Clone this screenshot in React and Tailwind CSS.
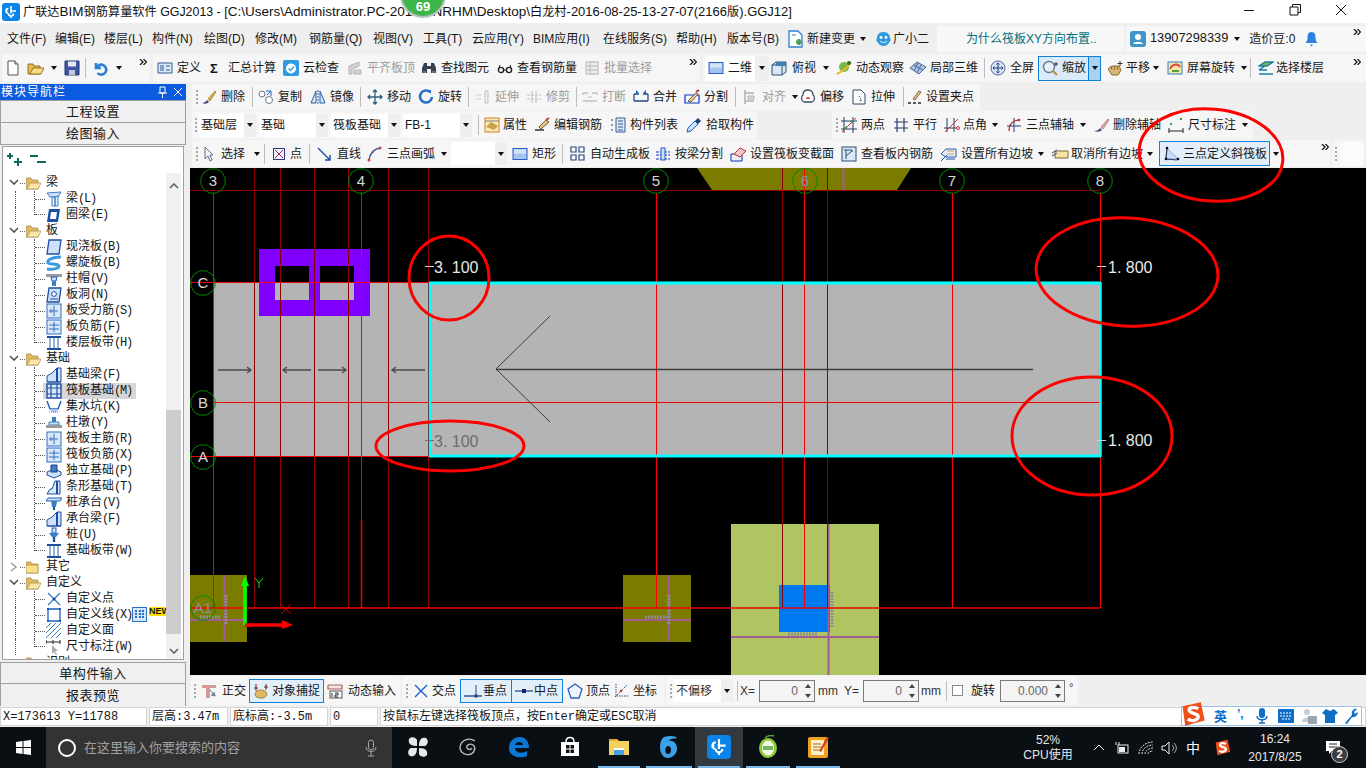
import clsx from 'clsx';

// small wrapper so every toolbar icon has the same 16px box
const S = ({ children, className = 'w-4 h-4', box = '0 0 16 16' }) => (
    <svg viewBox={box} className={clsx('shrink-0', className)}>{children}</svg>
);

const Logo = ({ className = 'w-[18px] h-[18px]' }) => (
    <svg viewBox="0 0 18 18" className={clsx('shrink-0', className)}>
        <rect width="18" height="18" rx="3" fill="#0a84e8" />
        <path d="M9 3v7.5M9 13.5v1.5M4 8h1.5M8 8h6M6.5 5.5a2.5 2.5 0 1 0 0 5M11.5 10.5a2.5 2.5 0 0 1-5 0" fill="none" stroke="#fff" strokeWidth="1.6" />
    </svg>
);

const icons = {
    doc: <S><path d="M3 1h7l3 3v11H3z" fill="#fff" stroke="#555" /><path d="M10 1v3h3" fill="#ddd" stroke="#555" /></S>,
    open: <S className="w-[18px] h-4" box="0 0 18 16"><path d="M1 4h5l1 2h6v8H1z" fill="#e8b84a" stroke="#9a7424" /><path d="M3 14l3-6h11l-3 6z" fill="#f8dc8c" stroke="#9a7424" /></S>,
    save: <S><path d="M1 1h14v14H1z" fill="#3a54a8" stroke="#26366e" /><path d="M4 1.5h8v5H4z" fill="#e6e6ee" /><path d="M5 10h6v5H5z" fill="#c6c6d0" /></S>,
    undo: <S><path d="M3 3v5h5M3.5 8a5 5 0 1 1 1 5" fill="none" stroke="#2d7fd4" strokeWidth="2.6" /></S>,
    define: <S><path d="M1 3h14v10H1z" fill="#dbe8f8" stroke="#2d5f9e" /><path d="M3 6h4M3 8h4M3 10h4M9 6h4M9 10h4" stroke="#2d5f9e" /></S>,
    cloud: <S><rect width="16" height="16" rx="2" fill="#2f9ae0" /><circle cx="8" cy="8.5" r="5" fill="#fff" /><path d="M5.5 8.5l2 2 3.5-4" fill="none" stroke="#2f9ae0" strokeWidth="1.4" /></S>,
    flush: <S><path d="M2 6l10-4v4l-7 3v5H2zM7 10h7v4H7z" fill="#d2d2d2" stroke="#b4b4b4" /></S>,
    bino: <S><path d="M1 13V8l2-5h3v10zM15 13V8l-2-5h-3v10zM6 6h4v3H6z" fill="#34404e" /><path d="M2 12h3M11 12h3" stroke="#9db2c8" /></S>,
    glasses: <S><circle cx="4" cy="10" r="2.6" fill="none" stroke="#222" strokeWidth="1.4" /><circle cx="12" cy="10" r="2.6" fill="none" stroke="#222" strokeWidth="1.4" /><path d="M6.6 10h2.8M2 8l1-3M14 8l-1-3" stroke="#222" /></S>,
    batch: <S><path d="M2 2h12v12H2zM2 6h12M2 10h12M6 2v12" fill="#eee" stroke="#c4c4c4" strokeWidth="1.3" /></S>,
    rect2d: <S><rect x="1" y="2.5" width="14" height="11" fill="#a8c4f2" stroke="#2a5fc4" /><rect x="2" y="3.5" width="12" height="4" fill="#d6e4fb" /></S>,
    cube: <S><path d="M1 5l4-3h10v10l-4 3H1z" fill="#dbe8f4" stroke="#2d4f6e" /><path d="M1 5h10v10M11 5l4-3" fill="none" stroke="#2d4f6e" /><path d="M5 2l10 0v4l-10 0z" fill="#3f7fae" /></S>,
    orbit: <S className="w-[18px] h-4" box="0 0 18 16"><circle cx="9" cy="7" r="5" fill="#7ab648" /><path d="M2 14C6 12 13 7 16 2" fill="none" stroke="#e0c020" strokeWidth="2" /><circle cx="14" cy="3" r="2" fill="#3a6a20" /></S>,
    part3d: <S className="w-[18px] h-4" box="0 0 18 16"><path d="M1 8l7-6 9 5-7 7z" fill="#a8c4e8" stroke="#4a6a90" /><path d="M5 5l9 5M9 3l-4 8M12 5l-4 8" stroke="#4a6a90" /></S>,
    full: <S><circle cx="8" cy="8" r="7" fill="#d8e4f4" stroke="#4a6a90" /><path d="M8 3v10M3 8h10M6.5 4.5L8 3l1.5 1.5M6.5 11.5L8 13l1.5-1.5M4.5 6.5L3 8l1.5 1.5M11.5 6.5L13 8l-1.5 1.5" fill="none" stroke="#1f3f80" /></S>,
    zoom: <S className="w-[18px] h-4" box="0 0 18 16"><circle cx="7" cy="7" r="5.5" fill="#e8f0fa" stroke="#6a7a8a" strokeWidth="1.4" /><path d="M11 11l4 4" stroke="#c09040" strokeWidth="2.2" /><path d="M14 2v4M12 4h4" stroke="#333" /></S>,
    pan: <S className="w-5 h-4" box="0 0 20 16"><path d="M3 9l4-3 7 0 2 4-3 5H7z" fill="#d8b878" stroke="#8a6a30" /><path d="M6 6l1 4M9 6l1 4M12 6l1 4" stroke="#8a6a30" /><path d="M15 1v5M12.5 3.5h5" stroke="#333" /></S>,
    rotate: <S><rect x="1" y="2" width="14" height="12" fill="#f4e8a0" stroke="#2d7fd4" /><path d="M3 9c2-5 8-6 10-2" fill="none" stroke="#d44" strokeWidth="1.8" /><path d="M5 11h7" stroke="#5a9a3a" strokeWidth="2" /></S>,
    floors: <S><path d="M1 6l6-4h8L9 6zM1 10l6-4M1 10h8M1 14h14" fill="#7ab648" stroke="#1c7fa8" strokeWidth="1.5" /></S>,
    del: <S><path d="M1 14c2 0 4-1 5-3l2 2c-2 2-4 2-7 1z" fill="#3a4a70" /><path d="M7 10l7-8 1 1-6 9z" fill="#e0b040" stroke="#8a6a20" strokeWidth=".6" /></S>,
    copy: <S><circle cx="4" cy="5" r="3" fill="#fff" stroke="#6a7a8a" /><circle cx="11" cy="11" r="3.5" fill="#fff" stroke="#6a7a8a" /><path d="M8 2h5v5M13 2L9 6" fill="none" stroke="#2a5fc4" /></S>,
    mirror: <S><path d="M1 14L6 2v12zM15 14L10 2v12z" fill="#dbe8f8" stroke="#2a5fa8" /><path d="M8 1v14" stroke="#2a5fa8" strokeDasharray="2 1" /></S>,
    move: <S><path d="M8 1v14M1 8h14M6 3l2-2 2 2M6 13l2 2 2-2M3 6L1 8l2 2M13 6l2 2-2 2" fill="none" stroke="#2d5f80" strokeWidth="1.3" /></S>,
    spin: <S><path d="M12 3a6 6 0 1 0 2 5" fill="none" stroke="#2a6fc4" strokeWidth="2.6" /><path d="M9 1l4 0 0 4z" fill="#2a6fc4" /></S>,
    extend: <S><path d="M1 6h6M1 10h6" stroke="#c0c0c0" strokeDasharray="2 1" /><path d="M10 2h3v12h-3z" fill="#eee" stroke="#c0c0c0" /></S>,
    trim: <S><path d="M1 6h14M1 10h14" stroke="#c0c0c0" strokeDasharray="3 1" /><path d="M6 2v12M10 2v12" stroke="#c0c0c0" /></S>,
    brk: <S><path d="M1 4h5M10 4h5M1 12h14M1 4v2M15 4v2" stroke="#c0c0c0" strokeWidth="1.4" /><path d="M6 8h4" stroke="#c0c0c0" /></S>,
    merge: <S><path d="M1 5h5M15 5h-5M1 12h14M1 5v7M15 5v7" fill="none" stroke="#2a4a80" strokeWidth="1.3" /><path d="M3 1l3 3-3 1zM13 1l-3 3 3 1z" fill="#1c5fc0" /></S>,
    split: <S><path d="M1 6h14v8H1z" fill="none" stroke="#1030c0" strokeWidth="1.2" /><path d="M4 12l8-8 2 1-7 8z" fill="#e8d4a0" stroke="#6a5a30" /><path d="M12 3l3-2" stroke="#c03030" strokeWidth="2" /></S>,
    align: <S><path d="M3 1v14M3 4h9M3 12h9" stroke="#b0b0b0" strokeWidth="1.5" /><path d="M6 7h6v3H6z" fill="#ddd" stroke="#b0b0b0" /></S>,
    offset: <S><path d="M8 1C4 1 3 4 3 6 1 7 1 12 4 13h8c3-1 3-6 1-7 0-2-1-5-5-5z" fill="#fff" stroke="#3a4a60" strokeWidth="1.3" /><path d="M6 10c0-3 4-3 4 0z" fill="#e06050" /></S>,
    stretch: <S><path d="M2 1h8l4 4v10H2z" fill="#fff" stroke="#2a4a70" /><path d="M8 7l3 5M10 12l-2-1" stroke="#2a4a70" strokeDasharray="1.5 1" fill="none" /></S>,
    grip: <S><path d="M1 14h3M6 14h3M11 14h3" stroke="#222" strokeWidth="1.6" /><path d="M6 10l6-8 2 1-6 8z" fill="#e8c878" stroke="#7a6a40" /></S>,
    attr: <S><rect x="1" y="1" width="14" height="14" fill="#fde9b8" stroke="#d08020" /><path d="M2 10l5-5 7 4-4 4z" fill="#c9a24a" /><path d="M1 4h14" stroke="#808080" /></S>,
    edit: <S><path d="M1 13h9" stroke="#222" strokeWidth="1.4" /><path d="M5 10l7-7 3 2-8 7z" fill="#e8c878" stroke="#6a5a30" /><path d="M12 3l3-2" stroke="#c04030" strokeWidth="2" /></S>,
    list: <S><path d="M1 2h2v2H1zM1 7h2v2H1zM1 12h2v2H1z" fill="#8a9ab0" /><path d="M6 1h9v14H6z" fill="#dbe8f8" stroke="#3a5a8a" /><path d="M8 4h5M8 7h5M8 10h5M8 13h5" stroke="#3a5a8a" /></S>,
    pick: <S><path d="M1 15l1-4 7-7 3 3-7 7z" fill="#cfe0fa" stroke="#1c5fc0" /><path d="M9 4l3-3 3 3-3 3z" fill="#1c3f80" /></S>,
    twopt: <S><path d="M3 0v16M12 0v16M0 4h16M0 12h16" stroke="#2a3a70" /><path d="M1 15L15 1" stroke="#d03030" /><circle cx="5" cy="11" r="1.4" fill="#3a9a3a" /><circle cx="11" cy="5" r="1.4" fill="#3a9a3a" /></S>,
    parallel: <S><path d="M4 1v14M11 1v14M1 5h14M1 11h14" stroke="#2a3a70" strokeWidth="1.2" /></S>,
    angle: <S><path d="M3 1v14M10 1v14M0 11h13" stroke="#2a3a70" /><path d="M1 15L14 2" stroke="#d03030" /><circle cx="14" cy="11" r="1.5" fill="none" stroke="#d03030" /></S>,
    arc3: <S><path d="M3 14C3 7 7 3 13 3" fill="none" stroke="#c03030" strokeWidth="1.3" /><path d="M8 1v14M1 9h14" stroke="#2a3a70" /><circle cx="13" cy="3" r="1.3" fill="#c03030" /></S>,
    delaxis: <S className="w-[18px] h-4" box="0 0 18 16"><path d="M1 14c3 0 5-1 6-3l2 2c-2 2-5 2-8 1z" fill="#3a4a70" /><path d="M8 10l7-8 1 1-6 9z" fill="#e8a8a8" stroke="#7a5a5a" strokeWidth=".6" /></S>,
    dim: <S><path d="M1 14h14M1 11v5M15 11v5" stroke="#222" /><rect x="2" y="6" width="2" height="2" fill="#3a9a3a" /><rect x="12" y="1" width="2" height="2" fill="#3a9a3a" /></S>,
    cursor: <S className="w-[10px] h-4" box="0 0 10 16"><path d="M1 1v12l3-3 2 5 2-1-2-5h3z" fill="#f4f4f4" stroke="#6a6a8a" /></S>,
    point: <S className="w-3 h-3" box="0 0 12 12"><rect x=".5" y=".5" width="11" height="11" fill="#eef2fa" stroke="#303a80" /><path d="M2 2l8 8M10 2l-8 8" stroke="#a02060" /></S>,
    line: <S><path d="M1 2l12 12M13 9v5H8" fill="none" stroke="#1c4fa0" strokeWidth="1.4" /></S>,
    arc: <S><path d="M2 14C3 7 7 3 13 2" fill="none" stroke="#2a5fa0" strokeWidth="1.4" /><circle cx="2" cy="14" r="1.5" fill="#d04040" /><circle cx="13" cy="2" r="1.5" fill="#d04040" /><circle cx="6" cy="6" r="1" fill="#d04040" /></S>,
    autoboard: <S><path d="M1 1h5v5H1zM9 1h5v5H9zM1 9h5v5H1zM9 9h5v5H9z" fill="#fff" stroke="#2a4a80" strokeWidth="1.2" /></S>,
    beamsplit: <S><path d="M1 13h14M1 9h14M1 6h14" stroke="#1030c0" strokeDasharray="3 1" /><rect x="6" y="2" width="4" height="12" fill="#cfe0fa" stroke="#1c5fc0" /></S>,
    section: <S className="w-[18px] h-4" box="0 0 18 16"><path d="M1 8h11v7H1z" fill="#e8f0fc" stroke="#1030c0" /><path d="M4 8l6-6 6 3-6 6z" fill="#f0c8c8" stroke="#c03030" /></S>,
    viewrebar: <S><rect x="1" y="1" width="14" height="14" fill="#dbe8f8" stroke="#2a4a70" /><path d="M3 4h8v2M5 10l6-5M5 4v9" fill="none" stroke="#2a4a70" /></S>,
    slopeall: <S className="w-[18px] h-4" box="0 0 18 16"><path d="M1 8l5-5h10v8H6z" fill="#e8f0fc" stroke="#2a5fa8" /><path d="M1 15l6-6M6 13h9" stroke="#1c4fa0" /><path d="M7 5h7M7 8h7" stroke="#c9a24a" /></S>,
    slopeoff: <S className="w-[18px] h-4" box="0 0 18 16"><path d="M4 5h13v7H4z" fill="#f4e4a0" stroke="#7a6a30" /><path d="M1 7l5-3M1 10l5-3" stroke="#2a4a80" /></S>,
    slope3: <S><path d="M3 2L14 13H2z" fill="#c9dcf8" stroke="#8aa8d8" /><path d="M3 2L2 13l11 1" fill="none" stroke="#2a3a60" strokeWidth="1.2" /><circle cx="3" cy="2" r="1.3" /><circle cx="2" cy="13" r="1.3" /><circle cx="14" cy="13" r="1.3" /></S>,
    ortho: <S><path d="M1 2h14v3H1zM5 2h4v13H5z" fill="#d49a9a" /><path d="M9 7l5 6M13 9l1 4-4-1" fill="#8a9ab0" stroke="#6a7a90" /></S>,
    snap: <S><path d="M3 1v7M13 1v6" stroke="#b04040" strokeWidth="1.3" /><path d="M2 11c2-5 7-5 11-2 2 2 0 6-4 6-4 0-7-1-7-4z" fill="#e0b860" stroke="#a08030" /><path d="M1 5h4M11 4h4" stroke="#3a3a3a" /></S>,
    dyn: <S><path d="M1 2h14M1 2v4h14V2" fill="#f4e4e4" stroke="#b06060" strokeWidth="1.2" /><rect x="3" y="8" width="12" height="7" fill="#fff" stroke="#555" /><path d="M5 10v4M8 10h3v2H8v2h3" fill="none" stroke="#222" /></S>,
    cross: <S><path d="M2 2l12 12M14 2L2 14" stroke="#1c5fc0" strokeWidth="1.4" /></S>,
    perp: <S className="w-5 h-4" box="0 0 20 16"><path d="M1 13h18" stroke="#2a4a80" strokeWidth="1.4" /><path d="M13 2v11" stroke="#2a4a80" /><rect x="11.5" y="11.5" width="3" height="3" fill="#1c3f90" /></S>,
    mid: <S className="w-5 h-4" box="0 0 20 16"><path d="M1 8h18" stroke="#3a5a90" strokeWidth="1.4" /><rect x="8" y="6" width="4" height="4" fill="#10207a" /></S>,
    apex: <S><path d="M8 1l7 5-3 9H4L1 6z" fill="#eef4fc" stroke="#2a5fc4" strokeWidth="1.3" /></S>,
    coord: <S><path d="M3 1v12h12" fill="none" stroke="#2a4a80" strokeDasharray="1.5 1" /><path d="M2 14L14 2" stroke="#2a4a80" strokeDasharray="1.5 1" /><circle cx="8" cy="8" r="1.3" fill="#c03030" /></S>,
    change: <S className="w-4 h-[18px]" box="0 0 16 18"><path d="M1 1h9l4 4v12H1z" fill="#fff" stroke="#2d7fd4" strokeWidth="1.3" /><path d="M4 5h4" stroke="#2d7fd4" /><path d="M11 9v6M8 12h6" stroke="#4aa04a" strokeWidth="3" /></S>,
    smile: <S className="w-[17px] h-4" box="0 0 17 16"><path d="M8.5 1C4 1 2 4 2 7c-1 1-1 3 0 3 1 3 4 5 6.5 5S14 13 15 10c1 0 1-2 0-3 0-3-2-6-6.5-6z" fill="#2f9ae0" /><circle cx="6" cy="6.5" r="1.4" fill="#fff" /><circle cx="11" cy="6.5" r="1.4" fill="#fff" /><path d="M5 10c2 2 5 2 7 0" fill="none" stroke="#fff" /></S>,
    user: <S><rect width="16" height="16" rx="3" fill="#3f94c8" /><circle cx="8" cy="6" r="3" fill="#fff" /><path d="M3 13c1-3 9-3 10 0z" fill="#fff" /></S>,
    bell: <S className="w-[13px] h-4" box="0 0 13 16"><path d="M6.5 1C3 1 2.5 4 2.5 7c0 2-1 4-2 5h12c-1-1-2-3-2-5 0-3-.5-6-4-6z" fill="#2f7fe0" /><path d="M5 13.5h3L6.5 15.5z" fill="#2f7fe0" /></S>,
};

const treeIcons = {
    beam: <S><path d="M1 2l14-1-3 5H4z" fill="#cfe0fa" stroke="#3a7fc4" /><path d="M6 6h3v9H6zM9 6l3-1v10H9z" fill="#e6f0fd" stroke="#3a7fc4" /></S>,
    ring: <S><path d="M3 2h11l-2 13H1z" fill="#1c4fa0" /><path d="M5 5h6l-1 7H4z" fill="#fff" /></S>,
    slab: <S><path d="M3 1h12l-2 14H1z" fill="#cfe0fa" stroke="#1c4fa0" strokeWidth="1.3" /></S>,
    spiral: <S><path d="M15 2C6 2 1 5 2 8c2 2 9 0 11 3 0 2-5 4-12 3" fill="none" stroke="#3a9ae0" strokeWidth="3" /></S>,
    cap: <S><path d="M0 3h16v3H0z" fill="#9a9a9a" /><path d="M5 6h6l-1 4H6z" fill="#cfe0fa" stroke="#1c5fc0" /><rect x="6" y="10" width="4" height="5" fill="#3a7fc4" /></S>,
    hole: <S><path d="M3 1h12l-2 14H1z" fill="#cfe0fa" stroke="#1c4fa0" strokeWidth="1.3" /><circle cx="8" cy="7" r="2.4" fill="#fff" stroke="#1c4fa0" /><path d="M4 12h8" stroke="#1c4fa0" /></S>,
    rebar: <S><rect x="1" y="1" width="14" height="14" fill="#dbe8f8" stroke="#2a6fc4" /><path d="M8 3v10M3 8h9M5 6v4" fill="none" stroke="#2a6fc4" /></S>,
    neg: <S><rect x="1" y="1" width="14" height="14" fill="#dbe8f8" stroke="#2a6fc4" /><path d="M3 6h10M3 10h10M8 3v10" fill="none" stroke="#2a6fc4" /></S>,
    strip: <S><path d="M1 2h14M1 14h14" stroke="#1c4fa0" strokeWidth="1.8" /><path d="M4 3v10M8 3v10M12 3v10" stroke="#5a8ac4" strokeWidth="1.3" /></S>,
    fbeam: <S><path d="M1 15V9l5-3 5-5h4v14z" fill="#cfe0fa" stroke="#1c4fa0" /><path d="M11 1v14" stroke="#1c4fa0" strokeWidth="2" /><path d="M1 15h14" stroke="#1c4fa0" /></S>,
    raft: <S><rect x="1" y="1" width="14" height="14" fill="#dbe8f8" stroke="#1c4fa0" strokeWidth="1.4" /><path d="M5 1v14M11 1v14M1 5h14M1 11h14" stroke="#1c4fa0" strokeWidth="1.2" /></S>,
    pit: <S><path d="M1 2l3 8h8l3-8" fill="none" stroke="#1c5fc0" strokeWidth="1.4" /><path d="M4 10c1 5 7 5 8 0z" fill="#a8c4e8" /><path d="M3 13h10" stroke="#6a8ab0" strokeDasharray="1 1" /></S>,
    pier: <S><path d="M6 2h4v5H6z" fill="#3a7fc4" /><path d="M3 7h10v3H3z" fill="#cfe0fa" stroke="#3a7fc4" /><path d="M0 10h16v3H0z" fill="#9a9a9a" /></S>,
    iso: <S><path d="M1 9l7-3 7 3v3l-7 3-7-3z" fill="#cfe0fa" stroke="#1c4fa0" /><path d="M5 2h6v7H5z" fill="#3a7fc4" stroke="#1c3f80" /></S>,
    bar: <S><path d="M1 15l3-5h2l3-8h5v13z" fill="#dbe8f8" stroke="#1c4fa0" /><path d="M11 2v13" stroke="#1c4fa0" strokeWidth="2" /></S>,
    cap2: <S><path d="M2 3h14l-2 3H0z" fill="#cfe0fa" stroke="#1c5fc0" /><path d="M5 6h6l-1 6H6z" fill="#3a7fc4" /><path d="M8 12v3" stroke="#1c4fa0" strokeWidth="2" /></S>,
    pile: <S><rect x="6" y="1" width="4" height="5" fill="#cfe0fa" stroke="#1c5fc0" /><path d="M3 6h10l-3 4H6z" fill="#3a7fc4" /><path d="M8 10v5" stroke="#1c4fa0" strokeWidth="2.4" /></S>,
    cpoint: <S><path d="M2 2l12 12M14 2L2 14" stroke="#3a7fc4" strokeWidth="1.4" /><circle cx="8" cy="8" r="1.5" fill="#1c4fa0" /></S>,
    cline: <S><path d="M2 2h12v12H2z" fill="#fff" stroke="#1c5fc0" strokeWidth="1.3" /><path d="M1 1h2v2H1zM13 1h2v2h-2zM1 13h2v2H1zM13 13h2v2h-2z" fill="#1c5fc0" /></S>,
    cface: <S><rect width="15" height="15" fill="#fff" /><path d="M0 5l5-5M0 10L10 0M0 15L15 0M5 15L15 5M10 15l5-5" stroke="#3a7fc4" /></S>,
    cdim: <S><path d="M0 3h14M0 1v4M14 1v4M7 1v4" stroke="#222" /><path d="M6 6v9l2-2 2 3 1-1-2-3h3z" fill="#aaa" /></S>,
};

const Folder = ({ open = true }) => (
    <S className="w-[15px] h-[13px]" box="0 0 15 13">
        <path d="M0 1h5l1 2h6v9H0z" fill="#e2b860" stroke="#a8894a" strokeWidth=".7" />
        {open ? <path d="M1 12l3-6h11l-3 6z" fill="#fbe6a8" stroke="#a8894a" strokeWidth=".7" /> : <path d="M0 4h12v8H0z" fill="#fbe08c" stroke="#a8894a" strokeWidth=".7" />}
    </S>
);

const Caret = ({ className = 'ml-[6px]' }) => (
    <svg viewBox="0 0 6 4" className={clsx('w-[6px] h-1 shrink-0', className)}><path d="M0 0h6L3 4z" fill="#111" /></svg>
);

const More = ({ className }) => (
    <svg viewBox="0 0 8 6" className={clsx('w-2 h-[6px] shrink-0', className)}>
        <path d="M1 0l3 3-3 3M4.5 0l3 3-3 3" fill="none" stroke="#111" strokeWidth="1.2" />
    </svg>
);

const Grip = ({ className = 'ml-[4px] w-[5px]' }) => (
    <div className={clsx('flex flex-col gap-[2px] shrink-0', className)}>
        <i className="w-[2px] h-[2px] bg-[#a8a8a8]" />
        <i className="w-[2px] h-[2px] bg-[#a8a8a8]" />
        <i className="w-[2px] h-[2px] bg-[#a8a8a8]" />
        <i className="w-[2px] h-[2px] bg-[#a8a8a8]" />
    </div>
);

const Sep = ({ w }) => (
    <div className={clsx('h-full flex items-center shrink-0', w)}><i className="w-px h-[20px] bg-[#bdbdbd]" /></div>
);

function Tool({ w, icon, label, gray, caret, gap = 'gap-[4px]' }) {
    return (
        <div className={clsx('flex items-center h-full shrink-0 whitespace-nowrap', w, gap, gray && 'text-[#9c9c9c]')}>
            {icon}
            {label && <span>{label}</span>}
            {caret && <Caret className="ml-[2px]" />}
        </div>
    );
}

function Combo({ w, label }) {
    return (
        <div className={clsx('flex items-center h-[23px] bg-white shrink-0 pl-[2px]', w)}>
            <span className="flex-1 whitespace-nowrap overflow-hidden">{label}</span>
            <div className="w-[12px] h-full bg-[#efefef] flex items-center justify-center"><Caret className="m-0" /></div>
        </div>
    );
}

const menus = [
    ['文件(F)', 'w-[48px]'], ['编辑(E)', 'w-[49px]'], ['楼层(L)', 'w-[48px]'], ['构件(N)', 'w-[52px]'],
    ['绘图(D)', 'w-[51px]'], ['修改(M)', 'w-[54px]'], ['钢筋量(Q)', 'w-[64px]'], ['视图(V)', 'w-[50px]'],
    ['工具(T)', 'w-[49px]'], ['云应用(Y)', 'w-[61px]'], ['BIM应用(I)', 'w-[70px]'], ['在线服务(S)', 'w-[73px]'],
    ['帮助(H)', 'w-[51px]'], ['版本号(B)', 'w-[61px]'],
];

function TitleBar() {
    return (
        <div className="h-[23px] bg-white flex items-center pl-[2px] shrink-0">
            <Logo />
            {/* the title's chinese runs are narrower than its latin, hence the mixed sizes */}
            <span className="ml-[3px] text-[13.5px] whitespace-nowrap text-[#111]">
                <span className="text-[12.2px]">广联达</span>BIM<span className="text-[12.2px]">钢筋算量软件</span><span className="text-[12.4px]"> GGJ2013 - [</span>C:\Users\Administrator.PC-2014\VNRHM\Desktop\
                <span className="text-[13px]"><span className="text-[12.2px]">白龙村</span>-2016-08-25-13-27-07(2166<span className="text-[12.2px]">版</span>).GGJ12]</span>
            </span>
            <div className="ml-auto flex items-center h-full">
                <svg viewBox="0 0 140 23" className="w-[140px] h-[23px]">
                    <path d="M18 10.5h10M64 7h8v8h-8zM66.5 7V4.5h8v8H72M110 5l10 10M120 5l-10 10" fill="none" stroke="#111" />
                </svg>
            </div>
        </div>
    );
}

function MenuBar() {
    return (
        <div className="h-[31px] flex items-center pl-[7px] shrink-0">
            {menus.map(([label, w]) => <div key={label} className={clsx('shrink-0 whitespace-nowrap', w)}>{label}</div>)}
            <Tool w="w-[87px]" icon={icons.change} label="新建变更" gap="gap-[3px]" caret />
            <Tool w="w-[62px]" icon={icons.smile} label="广小二" gap="gap-[1px]" />
            <div className="w-[187px] h-[26px] bg-[#f7f7f7] rounded-[3px] flex items-center pl-[29px] text-[#00707c] whitespace-nowrap shrink-0">为什么筏板XY方向布置..</div>
            <div className="ml-[2px] flex-1 h-[26px] bg-[#f7f7f7] rounded-[3px] flex items-center pl-[4px]">
                {icons.user}
                <span className="ml-[4px] text-[12.8px]">13907298339</span>
                <Caret className="ml-[6px]" />
                <span className="ml-[9px]">造价豆:0</span>
                <span className="ml-[10px]">{icons.bell}</span>
                <More className="ml-auto mr-[5px] -translate-y-[7px]" />
            </div>
        </div>
    );
}

function MainToolbar() {
    return (
        <div className="h-[28px] flex items-center gap-[3px] shrink-0 pl-[2px]">
            <div className="w-[148px] h-full bg-[#f6f6f6] rounded-[3px] flex items-center pl-[3px]">
                <Tool w="w-[22px]" icon={icons.doc} />
                <Tool w="w-[37px]" icon={icons.open} caret />
                <Tool w="w-[21px]" icon={icons.save} />
                <Sep w="w-[8px]" />
                <Tool w="w-[34px]" icon={icons.undo} caret gap="gap-[5px]" />
                <More className="ml-[12px] -translate-y-[6px]" />
            </div>
            <div className="w-[547px] h-full bg-[#f6f6f6] rounded-[3px] flex items-center pl-[4px]">
                <Tool w="w-[53px]" icon={icons.define} label="定义" />
                <Tool w="w-[73px]" icon={<span className="w-[11px] font-bold text-[13px] leading-none">Σ</span>} label="汇总计算" gap="gap-[7px]" />
                <Tool w="w-[64px]" icon={icons.cloud} label="云检查" />
                <Tool w="w-[74px]" icon={icons.flush} label="平齐板顶" gray />
                <Tool w="w-[76px]" icon={icons.bino} label="查找图元" />
                <Tool w="w-[87px]" icon={icons.glasses} label="查看钢筋量" />
                <Tool w="w-[105px]" icon={icons.batch} label="批量选择" gray />
                <More className="-translate-y-[6px]" />
            </div>
            <div className="flex-1 h-full bg-[#f6f6f6] rounded-[3px] flex items-center pl-[2px]">
                <div className="w-[50px] h-[25px] bg-white flex items-center gap-[4px] pl-[3px] shrink-0">
                    {icons.rect2d}<span>二维</span>
                </div>
                <div className="w-[14px] h-[25px] bg-[#efefef] flex items-center justify-center shrink-0 mr-[2px]"><Caret className="m-0" /></div>
                <Tool w="w-[64px]" icon={icons.cube} label="俯视" caret gap="gap-[5px]" />
                <Tool w="w-[74px]" icon={icons.orbit} label="动态观察" gap="gap-[3px]" />
                <Tool w="w-[75px]" icon={icons.part3d} label="局部三维" gap="gap-[3px]" />
                <Sep w="w-[6px]" />
                <Tool w="w-[48px]" icon={icons.full} label="全屏" />
                <div className="w-[51px] h-[25px] bg-[#d9ebfb] border border-[#0f80d8] flex items-center gap-[2px] pl-[3px] shrink-0">
                    {icons.zoom}<span>缩放</span>
                </div>
                <div className="w-[12px] h-[25px] bg-[#a8d2f4] border border-l-0 border-[#0f80d8] flex items-center justify-center shrink-0 mr-[4px]"><Caret className="m-0" /></div>
                <Tool w="w-[62px]" icon={icons.pan} label="平移" caret gap="gap-[1px]" />
                <Tool w="w-[83px]" icon={icons.rotate} label="屏幕旋转" caret />
                <Sep w="w-[8px]" />
                <Tool w="w-[70px]" icon={icons.floors} label="选择楼层" gap="gap-[2px]" />
                <More className="ml-auto mr-[5px] -translate-y-[6px]" />
            </div>
        </div>
    );
}

function EditRow() {
    return (
        <div className="h-[26px] flex shrink-0 ml-[2px]">
            <div className="w-[788px] h-full bg-[#f6f6f6] rounded-[3px] flex items-center">
                <Grip className="ml-[4px] w-[5px]" />
                <Tool w="w-[51px]" icon={icons.del} label="删除" />
                <Sep w="w-[6px]" />
                <Tool w="w-[52px]" icon={icons.copy} label="复制" />
                <Tool w="w-[50px]" icon={icons.mirror} label="镜像" />
                <Sep w="w-[7px]" />
                <Tool w="w-[51px]" icon={icons.move} label="移动" />
                <Tool w="w-[50px]" icon={icons.spin} label="旋转" />
                <Sep w="w-[7px]" />
                <Tool w="w-[51px]" icon={icons.extend} label="延伸" gray />
                <Tool w="w-[50px]" icon={icons.trim} label="修剪" gray />
                <Sep w="w-[6px]" />
                <Tool w="w-[51px]" icon={icons.brk} label="打断" gray />
                <Tool w="w-[51px]" icon={icons.merge} label="合并" />
                <Tool w="w-[51px]" icon={icons.split} label="分割" />
                <Sep w="w-[7px]" />
                <Tool w="w-[58px]" icon={icons.align} label="对齐" gray caret />
                <Tool w="w-[51px]" icon={icons.offset} label="偏移" />
                <Tool w="w-[52px]" icon={icons.stretch} label="拉伸" />
                <Sep w="w-[4px]" />
                <Tool w="w-[73px]" icon={icons.grip} label="设置夹点" gap="gap-[3px]" />
            </div>
        </div>
    );
}

function PropRow() {
    return (
        <div className="h-[28px] flex shrink-0 ml-[2px] mt-px">
            <div className="w-[565px] h-full bg-[#f6f6f6] rounded-[3px] flex items-center">
                <Grip className="ml-[3px] w-[4px]" />
                <Combo w="w-[57px] mr-[3px]" label="基础层" />
                <Combo w="w-[69px] mr-[3px]" label="基础" />
                <Combo w="w-[69px] mr-[3px]" label="筏板基础" />
                <Combo w="w-[69px] mr-[6px]" label="FB-1" />
                <Sep w="w-[6px]" />
                <Tool w="w-[50px]" icon={icons.attr} label="属性" gap="gap-[3px]" />
                <Tool w="w-[76px]" icon={icons.edit} label="编辑钢筋" />
                <Tool w="w-[76px]" icon={icons.list} label="构件列表" />
                <Tool w="w-[71px]" icon={icons.pick} label="拾取构件" />
            </div>
            <div className="ml-[75px] w-[421px] h-full bg-[#f6f6f6] rounded-[3px] flex items-center">
                <Grip className="ml-[4px] w-[5px]" />
                <Tool w="w-[52px]" icon={icons.twopt} label="两点" />
                <Tool w="w-[51px]" icon={icons.parallel} label="平行" />
                <Tool w="w-[62px]" icon={icons.angle} label="点角" gap="gap-[3px]" caret />
                <Tool w="w-[87px]" icon={icons.arc3} label="三点辅轴" caret />
                <Tool w="w-[75px]" icon={icons.delaxis} label="删除辅轴" gap="gap-[2px]" />
                <Tool w="w-[85px]" icon={icons.dim} label="尺寸标注" caret />
            </div>
        </div>
    );
}

function DrawRow() {
    return (
        <div className="h-[28px] flex shrink-0 ml-[2px] mt-px">
            <div className="w-[1138px] h-[27px] bg-[#f6f6f6] rounded-[3px] flex items-center">
                <Grip className="ml-[4px] w-[8px]" />
                <Tool w="w-[60px]" icon={icons.cursor} label="选择" gap="gap-[7px]" caret />
                <Sep w="w-[9px]" />
                <Tool w="w-[36px]" icon={icons.point} label="点" gap="gap-[5px]" />
                <Sep w="w-[8px]" />
                <Tool w="w-[50px]" icon={icons.line} label="直线" />
                <Tool w="w-[84px]" icon={icons.arc} label="三点画弧" caret />
                <Combo w="w-[56px] mr-[5px]" label="" />
                <Tool w="w-[50px]" icon={icons.rect2d} label="矩形" />
                <Sep w="w-[8px]" />
                <Tool w="w-[85px]" icon={icons.autoboard} label="自动生成板" />
                <Tool w="w-[75px]" icon={icons.beamsplit} label="按梁分割" />
                <Tool w="w-[111px]" icon={icons.section} label="设置筏板变截面" gap="gap-[2px]" />
                <Tool w="w-[99px]" icon={icons.viewrebar} label="查看板内钢筋" />
                <Tool w="w-[111px]" icon={icons.slopeall} label="设置所有边坡" gap="gap-[3px]" caret />
                <Tool w="w-[108px]" icon={icons.slopeoff} label="取消所有边坡" gap="gap-[2px]" caret />
                <div className="w-[111px] h-[25px] bg-[#e2effa] border border-[#0f80d8] flex items-center gap-[3px] pl-[4px] shrink-0">
                    {icons.slope3}<span>三点定义斜筏板</span>
                </div>
                <Caret className="ml-[3px]" />
                <More className="ml-[42px] -translate-y-[7px]" />
            </div>
            <div className="ml-[2px] w-[32px] h-[27px] bg-[#f6f6f6] rounded-[3px] flex items-center">
                <Grip className="ml-[3px] w-[5px]" />
                <div className="flex-1 h-[24px] bg-[#fbfbfb]" />
            </div>
        </div>
    );
}

const gridV = [254, 280, 314, 348, 388, 428, 782, 827];
const axisV = [213, 361, 656, 952, 1100];
const axes = [
    [213, 181, '3'], [361, 181, '4'], [656, 181, '5'], [805, 181, '6'], [952, 181, '7'], [1100, 181, '8'],
    [203, 283, 'C'], [203, 403, 'B'], [203, 457, 'A'], [203, 608, 'A1'],
];

function octa(cx, cy, r) {
    const pts = [];
    for (let i = 0; i < 12; i++) {
        const a = (i * Math.PI) / 6 + Math.PI / 12;
        pts.push(`${cx + r * Math.cos(a)},${cy + r * Math.sin(a)}`);
    }
    return pts.join(' ');
}

// the drawing area is a CAD view, so it is one svg in page coordinates
function Canvas() {
    const arrows = [
        [218, 251, 1], [311, 283, -1], [318, 346, 1], [425, 392, -1],
    ];
    return (
        <svg viewBox="190 168 1176 507" className="block w-full h-[507px] bg-black shrink-0">
            <rect x="213" y="282" width="888" height="175" fill="#b4b4b4" />
            <path d="M259 249h111v67H259zM275 266v34h34v-34zM320 266v34h34v-34z" fill="#8000ff" fillRule="evenodd" />
            <path d="M697 168h214l-14 22H712z" fill="#7b7b00" />
            <path d="M843.5 168v22" stroke="#a45a96" strokeWidth="2" />

            <rect x="190" y="575" width="57" height="67" fill="#7b7b00" />
            <rect x="623" y="575" width="68" height="67" fill="#7b7b00" />
            <rect x="731" y="524" width="148" height="151" fill="#afc562" />
            <rect x="779" y="585" width="51" height="47" fill="#0078f0" />
            <path d="M224.5 575v67M190 620h57M668.5 575v67M623 620h68M828.5 524v151M731 637h148" stroke="#a45a96" strokeWidth="2" fill="none" />
            <path d="M226 595v30M200 617h20M669 595v30M645 617h22M832 592v36M788 634h30" stroke="#8f8f8f" strokeWidth="3" strokeDasharray="2 1" fill="none" />

            {gridV.map((x) => <path key={x} d={`M${x + 0.5} 168V608`} stroke="#8b0000" strokeWidth="1" />)}
            {axisV.map((x) => <path key={x} d={`M${x + 0.5} 193V608`} stroke="#ff0000" strokeWidth="1" />)}
            <path d="M804.5 168V608" stroke="#ff0000" />
            <path d="M190 190.5H1100" stroke="#8b0000" />
            <path d="M190 282.5H429M190 456.5H429M213 402.5H1100" stroke="#f00000" />
            <path d="M190 608H1100" stroke="#f00000" strokeWidth="1.5" />
            <path d="M361.5 520V608" stroke="#f00000" strokeWidth="1.5" />

            {/* cyan outline sits on top of the grid */}
            <path d="M429 283h672M429 456h672" stroke="#00ffff" strokeWidth="3" />
            <path d="M430 282v175M1100.5 282v175" stroke="#00ffff" strokeWidth="2.5" />

            {arrows.map(([a, b, dir]) => (
                <path key={a} d={`M${a} 370H${b}M${b - 4 * dir} 367L${b} 370L${b - 4 * dir} 373`} fill="none" stroke="#4a4a4a" strokeWidth="1.3" />
            ))}
            <path d="M496 369.5H1033" stroke="#3c3c3c" strokeWidth="1.6" />
            <path d="M550 316L496 369L550 422" fill="none" stroke="#3c3c3c" strokeWidth="1" />

            {axes.map(([x, y, t]) => (
                <g key={t}>
                    <polygon points={octa(x, y, 12.5)} fill="none" stroke="#008a00" />
                    <text x={x} y={y + 5} textAnchor="middle" fontSize="15" fontFamily="Liberation Sans, sans-serif" fill={t === 'A1' || t === '6' ? '#8391ad' : '#d8d8d8'}>{t}</text>
                </g>
            ))}

            <g fontFamily="Liberation Sans, sans-serif" fontSize="16">
                <path d="M425 266.5h9" stroke="#d0d0d0" />
                <text x="434" y="273" fill="#e8e8e8">3. 100</text>
                <path d="M425 440.5h9" stroke="#707070" />
                <text x="434" y="447" fill="#6e6e6e">3. 100</text>
                <path d="M1097 266.5h9" stroke="#d0d0d0" />
                <text x="1108" y="273" fill="#e8e8e8">1. 800</text>
                <path d="M1097 440.5h9" stroke="#d0d0d0" />
                <text x="1108" y="446" fill="#e8e8e8">1. 800</text>
            </g>

            <path d="M245 625V584" stroke="#00ff00" strokeWidth="3.5" />
            <path d="M241 586l4-10 4 10z" fill="#00ff00" />
            <path d="M255 578l4 5 4-5M259 583v5" fill="none" stroke="#00e000" />
            <path d="M245 625H282" stroke="#ff0000" strokeWidth="3.5" />
            <path d="M282 620l11 5-11 4z" fill="#ff0000" />
            <path d="M281 604l10 10M291 604l-10 10" stroke="#e00000" />
        </svg>
    );
}

function BottomToolbar() {
    return (
        <div className="h-[31px] flex items-start pt-[1px] gap-[2px] ml-0 shrink-0">
            <div className="w-[210px] h-[29px] bg-[#f6f6f6] rounded-[3px] flex items-center">
                <Grip className="ml-[4px] w-[7px]" />
                <Tool w="w-[48px]" icon={icons.ortho} label="正交" gap="gap-[5px]" />
                <div className="w-[75px] h-[24px] bg-[#e2effa] border border-[#0f80d8] flex items-center gap-[3px] pl-[3px] shrink-0">
                    {icons.snap}<span>对象捕捉</span>
                </div>
                <Tool w="w-[69px] pl-[3px]" icon={icons.dyn} label="动态输入" gap="gap-[5px]" />
            </div>
            <div className="w-[262px] h-[29px] bg-[#f6f6f6] rounded-[3px] flex items-center">
                <Grip className="ml-[4px] w-[7px]" />
                <Tool w="w-[47px]" icon={icons.cross} label="交点" gap="gap-[3px]" />
                <div className="w-[52px] h-[24px] bg-[#e2effa] border border-[#0f80d8] flex items-center pl-[2px] shrink-0">
                    {icons.perp}<span>垂点</span>
                </div>
                <div className="w-[51px] h-[24px] bg-[#e2effa] border border-l-0 border-[#0f80d8] flex items-center pl-[2px] shrink-0">
                    {icons.mid}<span>中点</span>
                </div>
                <Tool w="w-[50px] pl-[4px]" icon={icons.apex} label="顶点" gap="gap-[3px]" />
                <Tool w="w-[46px]" icon={icons.coord} label="坐标" gap="gap-[4px]" />
            </div>
            <div className="w-[412px] h-[29px] bg-[#f6f6f6] rounded-[3px] flex items-center text-[#333]">
                <Grip className="ml-[4px] w-[4px]" />
                <Combo w="w-[59px] mr-[4px]" label="不偏移" />
                <Sep w="w-[3px]" />
                <span className="w-[19px] shrink-0">X=</span>
                <Spin w="w-[56px]" value="0" />
                <span className="ml-[3px] w-[26px] shrink-0">mm</span>
                <span className="w-[19px] shrink-0">Y=</span>
                <Spin w="w-[56px]" value="0" />
                <span className="ml-[2px] w-[25px] shrink-0">mm</span>
                <Sep w="w-[6px]" />
                <i className="w-[11px] h-[11px] border border-[#888] bg-white shrink-0" />
                <span className="ml-[8px] w-[29px] shrink-0 text-[#111]">旋转</span>
                <Spin w="w-[65px]" value="0.000" />
                <span className="ml-[4px] text-[11px] -mt-[6px]">°</span>
            </div>
        </div>
    );
}

function Spin({ w, value }) {
    return (
        <div className={clsx('h-[22px] border border-[#7a7a7a] flex items-center justify-end shrink-0 bg-[#f4f4f4] text-[#666]', w)}>
            <span className="pr-[4px]">{value}</span>
            <div className="w-[12px] h-full flex flex-col items-center justify-around">
                <svg viewBox="0 0 6 4" className="w-[6px] h-1"><path d="M0 4h6L3 0z" fill="#444" /></svg>
                <svg viewBox="0 0 6 4" className="w-[6px] h-1"><path d="M0 0h6L3 4z" fill="#444" /></svg>
            </div>
        </div>
    );
}

function Root({ label, closed }) {
    return (
        <div className="flex items-center h-4">
            {closed
                ? <svg viewBox="0 0 8 10" className="w-2 h-[10px] ml-[7px]"><path d="M1 1l5 4-5 4" fill="none" stroke="#a0a0a0" strokeWidth="1.6" /></svg>
                : <svg viewBox="0 0 10 8" className="w-[10px] h-2 ml-[6px]"><path d="M1 1l4 4 4-4" fill="none" stroke="#555" strokeWidth="1.6" /></svg>}
            <i className={clsx('border-t border-dotted border-[#666] w-[5px] mx-[1px]', closed && 'ml-[2px]')} />
            <Folder open={!closed} />
            <span className="ml-[5px]">{label}</span>
        </div>
    );
}

function Leaf({ icon, label, selected, last, children }) {
    // latin in the tree is half-width (6px), narrower than the mono font gives
    const [name, key] = label.split('(');
    return (
        <div className="flex items-center h-4">
            <i className="ml-[12px] w-[19px] shrink-0 h-full border-l border-dotted border-[#555]" />
            <i className={clsx('w-[10px] shrink-0 border-l border-dotted border-[#555] relative', last ? 'h-1/2 self-start' : 'h-full')}>
                <i className={clsx('absolute left-0 w-[10px] border-t border-dotted border-[#555]', last ? 'bottom-0' : 'top-1/2')} />
            </i>
            <div className={clsx('flex items-center h-full pl-[3px] -ml-[1px] gap-[4px] whitespace-nowrap shrink-0', selected && 'bg-[#d6d6d6]')}>
                {icon}
                <span className="pr-[4px]">
                    {name}
                    {key && <span className="tracking-[-1.2px]">({key}</span>}
                </span>
            </div>
            {children}
        </div>
    );
}

const NewBadge = () => (
    <div className="flex items-start -ml-[4px] shrink-0">
        <S><rect x=".5" y=".5" width="14" height="14" fill="#d6e6fa" stroke="#2a6fc4" /><path d="M4 3v9M8 3v9M11 3v9" stroke="#2a6fc4" strokeWidth="2" strokeDasharray="2 1" /></S>
        <span className="text-[9px] font-bold leading-[9px] bg-[#ffe000] ml-[1px] font-['Liberation_Sans',sans-serif]">NEW</span>
    </div>
);

function NavPanel() {
    return (
        <div className="w-[186px] h-[622px] flex flex-col shrink-0">
            <div className="h-[16px] bg-[#0a5be0] text-white flex items-center pl-[1px] tracking-[1px] shrink-0">
                <span>模块导航栏</span>
                <svg viewBox="0 0 26 14" className="ml-auto w-[28px] h-[14px] mr-[2px]">
                    <path d="M3 2h5v6H3zM1 8h9M5.5 8v5" fill="none" stroke="#fff" /><path d="M17 3l8 8M25 3l-8 8" stroke="#fff" />
                </svg>
            </div>
            <div className="h-[23px] bg-[#f0f0f0] border border-[#a0a0a0] flex items-center justify-center text-[13px] tracking-[0.5px] shrink-0">工程设置</div>
            <div className="h-[22px] bg-[#f0f0f0] border border-[#a0a0a0] border-t-0 flex items-center justify-center text-[13px] tracking-[0.5px] shrink-0">绘图输入</div>
            <div className="h-[514px] mx-[2px] mt-[1px] bg-white border border-[#a0a0a0] flex flex-col shrink-0 overflow-hidden">
                <div className="h-[26px] flex items-center pl-[4px] gap-[6px] shrink-0">
                    <svg viewBox="0 0 17 14" className="w-[17px] h-[14px]"><path d="M3 0v6M0 3h6M11 5v8M7 9h8" stroke="#0d6a5e" strokeWidth="2" /></svg>
                    <svg viewBox="0 0 17 14" className="w-[17px] h-[14px]"><path d="M0 3h8M7 9h9" stroke="#0d6a5e" strokeWidth="2" /></svg>
                </div>
                <div className="flex flex-1 min-h-0">
                    <div className="flex-1 min-w-0 overflow-hidden font-['Liberation_Mono','Noto_Sans_CJK_SC',monospace] pt-[2px]">
                        <Root label="梁" />
                        <Leaf icon={treeIcons.beam} label="梁(L)" />
                        <Leaf icon={treeIcons.ring} label="圈梁(E)" last />
                        <Root label="板" />
                        <Leaf icon={treeIcons.slab} label="现浇板(B)" />
                        <Leaf icon={treeIcons.spiral} label="螺旋板(B)" />
                        <Leaf icon={treeIcons.cap} label="柱帽(V)" />
                        <Leaf icon={treeIcons.hole} label="板洞(N)" />
                        <Leaf icon={treeIcons.rebar} label="板受力筋(S)" />
                        <Leaf icon={treeIcons.neg} label="板负筋(F)" />
                        <Leaf icon={treeIcons.strip} label="楼层板带(H)" last />
                        <Root label="基础" />
                        <Leaf icon={treeIcons.fbeam} label="基础梁(F)" />
                        <Leaf icon={treeIcons.raft} label="筏板基础(M)" selected />
                        <Leaf icon={treeIcons.pit} label="集水坑(K)" />
                        <Leaf icon={treeIcons.pier} label="柱墩(Y)" />
                        <Leaf icon={treeIcons.rebar} label="筏板主筋(R)" />
                        <Leaf icon={treeIcons.neg} label="筏板负筋(X)" />
                        <Leaf icon={treeIcons.iso} label="独立基础(P)" />
                        <Leaf icon={treeIcons.bar} label="条形基础(T)" />
                        <Leaf icon={treeIcons.cap2} label="桩承台(V)" />
                        <Leaf icon={treeIcons.fbeam} label="承台梁(F)" />
                        <Leaf icon={treeIcons.pile} label="桩(U)" />
                        <Leaf icon={treeIcons.strip} label="基础板带(W)" last />
                        <Root label="其它" closed />
                        <Root label="自定义" />
                        <Leaf icon={treeIcons.cpoint} label="自定义点" />
                        <Leaf icon={treeIcons.cline} label="自定义线(X)"><NewBadge /></Leaf>
                        <Leaf icon={treeIcons.cface} label="自定义面" />
                        <Leaf icon={treeIcons.cdim} label="尺寸标注(W)" last />
                        <Root label="识别" />
                    </div>
                    <div className="w-[15px] mr-[2px] bg-[#f0f0f0] flex flex-col items-center shrink-0">
                        <div className="h-[17px] flex items-center"><svg viewBox="0 0 10 6" className="w-[10px] h-[6px] mt-[8px]"><path d="M1 5l4-4 4 4" fill="none" stroke="#606060" strokeWidth="1.6" /></svg></div>
                        <div className="w-full h-[224px] mt-auto bg-[#cdcdcd]" />
                        <div className="h-[25px] flex items-end pb-[5px]"><svg viewBox="0 0 10 6" className="w-[10px] h-[6px]"><path d="M1 1l4 4 4-4" fill="none" stroke="#606060" strokeWidth="1.6" /></svg></div>
                    </div>
                </div>
            </div>
            <div className="h-[22px] mt-[2px] bg-[#f0f0f0] border border-[#a0a0a0] flex items-center justify-center text-[13px] tracking-[0.5px] shrink-0">单构件输入</div>
            <div className="h-[23px] bg-[#f0f0f0] border border-[#a0a0a0] border-t-0 flex items-center justify-center text-[13px] tracking-[0.5px] shrink-0">报表预览</div>
        </div>
    );
}

function StatusBar() {
    const cell = 'h-[19px] bg-white border border-[#d4d4d4] flex items-center pl-[2px] shrink-0 whitespace-nowrap overflow-hidden';
    return (
        <div className="h-[21px] flex items-center gap-[2px] bg-[#f0f0f0] font-['Liberation_Mono','Noto_Sans_CJK_SC',monospace] shrink-0">
            <div className={clsx(cell, 'w-[147px]')}>X=173613 Y=11788</div>
            <div className={clsx(cell, 'w-[79px]')}>层高:3.47m</div>
            <div className={clsx(cell, 'w-[98px]')}>底标高:-3.5m</div>
            <div className={clsx(cell, 'w-[48px]')}>0</div>
            <div className={clsx(cell, 'flex-1')}>按鼠标左键选择筏板顶点，按Enter确定或ESC取消</div>
        </div>
    );
}

function TaskButton({ w = 'w-[50px]', active, running, children }) {
    return (
        <div className={clsx('h-full flex flex-col shrink-0', w, active && 'bg-[#33393f]')}>
            <div className="flex-1 flex items-center justify-center">{children}</div>
            <i className={clsx('h-[2px] mx-[3px]', running ? 'bg-[#76b9ed]' : 'bg-transparent', active && 'mx-0')} />
        </div>
    );
}

const SogouMark = ({ className }) => (
    <svg viewBox="0 0 20 20" className={clsx('shrink-0', className)}>
        <path d="M2 4l14-3 3 14-15 4z" fill="#f04e18" />
        <path d="M14 6c-3-2-7-1-7 1 0 3 7 2 7 5 0 3-5 4-8 2" fill="none" stroke="#fff" strokeWidth="2.6" />
    </svg>
);

function Taskbar() {
    return (
        <div className="h-[41px] bg-[#0a0f14] flex items-center text-white shrink-0">
            <div className="w-[46px] h-full flex items-center justify-center shrink-0">
                <svg viewBox="0 0 15 15" className="w-[15px] h-[15px]"><path d="M0 2l6.5-1v6H0zM7.5 1L15 0v7H7.5zM0 8h6.5v6L0 13zM7.5 8H15v7l-7.5-1z" fill="#fff" /></svg>
            </div>
            <div className="w-[346px] h-full bg-[#333333] flex items-center shrink-0 pl-[12px] text-[#a0a0a0] text-[13px]">
                <i className="w-[18px] h-[18px] rounded-full border-[2px] border-white shrink-0" />
                <span className="ml-[8px] whitespace-nowrap">在这里输入你要搜索的内容</span>
                <svg viewBox="0 0 12 18" className="ml-auto mr-[15px] w-3 h-[18px]"><rect x="3.5" y="1" width="5" height="10" rx="2.5" fill="none" stroke="#a8a8a8" /><path d="M1 8c0 6 10 6 10 0M6 13v4M3 17h6" fill="none" stroke="#a8a8a8" /></svg>
            </div>
            <div className="w-px shrink-0" />
            <TaskButton>
                <svg viewBox="0 0 22 22" className="w-[22px] h-[22px]"><path d="M10 10C3 10 1 7 2 3c2-3 7-2 8 1zM12 10c0-7 3-9 7-8 3 2 2 7-1 8zM12 12c7 0 9 3 8 7-2 3-7 2-8-1zM10 12c0 7-3 9-7 8-3-2-2-7 1-8z" fill="#e8e8e8" /></svg>
            </TaskButton>
            <TaskButton>
                <svg viewBox="0 0 20 20" className="w-5 h-5"><path d="M17 4C11 0 3 3 2 10c0 6 6 9 11 7 4-2 5-7 2-9-3-2-7 0-6 3 1 2 4 2 5 0" fill="none" stroke="#bcbcbc" strokeWidth="1.4" /></svg>
            </TaskButton>
            <TaskButton w="w-[52px]">
                <svg viewBox="0 0 22 22" className="w-[22px] h-[22px]"><path d="M1 12C1 5 6 1 12 1c6 0 9 5 9 11H7c0 5 7 6 12 3v5c-7 3-18 1-18-8zm6-3h8c0-4-7-4-8 0z" fill="#0a78d4" /></svg>
            </TaskButton>
            <TaskButton>
                <svg viewBox="0 0 20 22" className="w-5 h-[22px]"><path d="M1 6h18v14H1z" fill="#fff" /><path d="M6 6c0-6 8-6 8 0" fill="none" stroke="#fff" strokeWidth="1.5" /><path d="M6 9h3.5v3.5H6zM10.5 9H14v3.5h-3.5zM6 13.5h3.5V17H6zM10.5 13.5H14V17h-3.5z" fill="#111" /></svg>
            </TaskButton>
            <TaskButton w="w-[48px]" running>
                <svg viewBox="0 0 22 20" className="w-[22px] h-5"><path d="M1 2h8l2 2h10v14H1z" fill="#f4d060" /><path d="M1 2h8l2 2H1z" fill="#e0a830" /><path d="M6 11h10v7H6z" fill="#42a5e0" /><path d="M6 11h10v2H6z" fill="#fff" /></svg>
            </TaskButton>
            <TaskButton w="w-[52px]" running>
                <svg viewBox="0 0 20 24" className="w-5 h-6"><path d="M5 2c6-2 12-1 13 1-2 1-7 0-8 3 5-1 8 3 8 8 0 5-5 9-9 9-5 0-8-5-8-11C1 8 2 4 5 2zm4 9c-3 0-4 8 0 8s4-8 0-8z" fill="#3aa0e8" /></svg>
            </TaskButton>
            <TaskButton w="w-[48px]" active running><Logo className="w-6 h-6" /></TaskButton>
            <TaskButton running>
                <svg viewBox="0 0 22 24" className="w-[22px] h-6"><ellipse cx="11" cy="13" rx="9" ry="10" fill="#8ccc3c" /><ellipse cx="11" cy="13" rx="6" ry="7.5" fill="#f2f8e4" /><path d="M6 12h10M6 14h10" stroke="#4aa030" strokeWidth="1.6" /><path d="M8 3C10 1 14 0 17 1" fill="none" stroke="#5aa030" strokeWidth="1.6" /></svg>
            </TaskButton>
            <TaskButton running>
                <svg viewBox="0 0 22 24" className="w-[22px] h-6"><rect x="1" y="2" width="20" height="21" rx="2" fill="#f0a020" /><rect x="4" y="5" width="13" height="15" fill="#fdf0c8" /><path d="M6 9h8M6 12h8M6 15h6" stroke="#a07030" /><path d="M12 16L20 2l2 1-8 14z" fill="#d04020" /></svg>
            </TaskButton>
            <div className="flex-1" />
            <div className="w-[60px] h-full flex flex-col items-center justify-center text-[12px] leading-[15px] shrink-0 text-[#e8e8e8]">
                <span>52%</span>
                <span>CPU使用</span>
            </div>
            <div className="w-[10px] shrink-0" />
            <div className="w-[22px] flex justify-center shrink-0"><svg viewBox="0 0 12 7" className="w-3 h-[7px]"><path d="M1 6l5-5 5 5" fill="none" stroke="#eee" /></svg></div>
            <div className="w-[24px] flex justify-center shrink-0"><svg viewBox="0 0 14 14" className="w-[14px] h-[14px]"><rect x="3" y="4" width="10" height="8" fill="none" stroke="#eee" /><path d="M4 6h6v5H4z" fill="#eee" /><path d="M1 1v3M4 1v3" stroke="#eee" /></svg></div>
            <div className="w-[24px] flex justify-center shrink-0"><svg viewBox="0 0 16 14" className="w-4 h-[14px]"><path d="M1 13C1 6 8 1 15 1M4 13c0-5 5-9 11-9M7 13c0-3 4-6 8-6M10 13c0-2 3-3 5-3" fill="none" stroke="#ddd" strokeDasharray="2 1" /></svg></div>
            <div className="w-[22px] flex justify-center shrink-0"><svg viewBox="0 0 16 16" className="w-4 h-4"><path d="M1 6h3l4-4v12l-4-4H1z" fill="none" stroke="#eee" /><path d="M11 5c2 2 2 4 0 6M13 3c3 3 3 7 0 10" fill="none" stroke="#bbb" /></svg></div>
            <div className="w-[26px] flex justify-center shrink-0 text-[14px] text-white">中</div>
            <div className="w-[32px] flex justify-center shrink-0"><SogouMark className="w-[17px] h-[17px]" /></div>
            <div className="w-[74px] h-full flex flex-col items-center justify-center text-[12px] leading-[18px] shrink-0 text-[#e8e8e8]">
                <span>16:24</span>
                <span>2017/8/25</span>
            </div>
            <div className="w-[54px] shrink-0 flex relative h-full items-center pl-[13px]">
                <svg viewBox="0 0 16 15" className="w-4 h-[15px]"><path d="M1 1h14v10h-8l-3 3v-3H1z" fill="#fff" /><path d="M4 4h8M4 7h8" stroke="#222" /></svg>
                <span className="absolute left-[19px] top-[19px] w-[17px] h-[17px] rounded-full bg-[#3c3c3c] border border-[#ccc] text-[11px] leading-[15px] text-center font-bold">2</span>
            </div>
        </div>
    );
}

function SogouBar() {
    return (
        <div className="absolute left-[1181px] top-[706px] w-[181px] h-[20px] bg-white border border-[#9cc4e8] flex items-center z-10">
            <SogouMark className="-ml-[2px] w-[26px] h-[26px] -mt-[4px]" />
            <span className="ml-[8px] text-[13px] font-bold text-[#0f6fc6]">英</span>
            <span className="ml-[10px] text-[12px] font-bold text-[#0f6fc6] -mt-[4px]">’,</span>
            <svg viewBox="0 0 12 16" className="ml-[12px] w-3 h-4"><rect x="3" y="0" width="6" height="10" rx="3" fill="#0f6fc6" /><path d="M1 8c0 5 10 5 10 0M6 12v3M3 15h6" fill="none" stroke="#0f6fc6" strokeWidth="1.4" /></svg>
            <svg viewBox="0 0 16 14" className="ml-[10px] w-4 h-[14px]"><rect width="16" height="14" rx="1" fill="#0f6fc6" /><path d="M2 4h12M2 7h12M4 10h8" stroke="#fff" strokeDasharray="2 1" /></svg>
            <svg viewBox="0 0 16 16" className="ml-[7px] w-4 h-4"><circle cx="6" cy="4" r="3" fill="#c4ccd4" /><path d="M1 14c0-6 10-6 10 0z" fill="#c4ccd4" /><rect x="7" y="8" width="9" height="8" rx="1" fill="#98a4b0" /></svg>
            <svg viewBox="0 0 16 14" className="ml-[5px] w-4 h-[14px]"><path d="M4 0l4 2 4-2 4 4-3 2v8H3V6L0 4z" fill="#0f6fc6" /></svg>
            <svg viewBox="0 0 14 16" className="ml-[6px] w-[14px] h-4"><path d="M1 15L8 7C7 3 10 0 13 1l-3 3 1 2 3-2c0 3-3 6-6 5l-5 7z" fill="#0f6fc6" /></svg>
        </div>
    );
}

// hand drawn red marks lying over toolbars and drawing
function RedMarks() {
    return (
        <svg viewBox="0 0 1366 768" className="absolute inset-0 w-[1366px] h-[768px] pointer-events-none z-10">
            <g fill="none" stroke="#ff0000" strokeWidth="3">
                <ellipse cx="449" cy="278" rx="40" ry="42" />
                <ellipse cx="450" cy="446" rx="74" ry="25" />
                <ellipse cx="1127" cy="272" rx="91" ry="54" transform="rotate(3 1127 272)" />
                <ellipse cx="1092" cy="436" rx="80" ry="59" />
                <ellipse cx="1211" cy="155" rx="72" ry="46" transform="rotate(5 1211 155)" />
            </g>
        </svg>
    );
}

export default function App() {
    return (
        <div className="relative w-[1366px] h-[768px] overflow-hidden bg-[#efefef] flex flex-col text-[12px] leading-none text-[#161616] font-['Liberation_Sans','Noto_Sans_CJK_SC',sans-serif]">
            <div className="absolute left-[400px] -top-[28px] w-[46px] h-[46px] rounded-full bg-[#3cb54a] border-[2px] border-[#b4c4b8] z-10 flex items-end justify-center pb-[3px] text-white text-[13px] font-bold">69</div>
            <TitleBar />
            <MenuBar />
            <MainToolbar />
            <div className="flex mt-[2px] h-[622px] shrink-0">
                <NavPanel />
                <div className="ml-[4px] flex-1 min-w-0 flex flex-col">
                    <EditRow />
                    <PropRow />
                    <DrawRow />
                    <Canvas />
                    <BottomToolbar />
                </div>
            </div>
            <StatusBar />
            <Taskbar />
            <SogouBar />
            <RedMarks />
        </div>
    );
}
